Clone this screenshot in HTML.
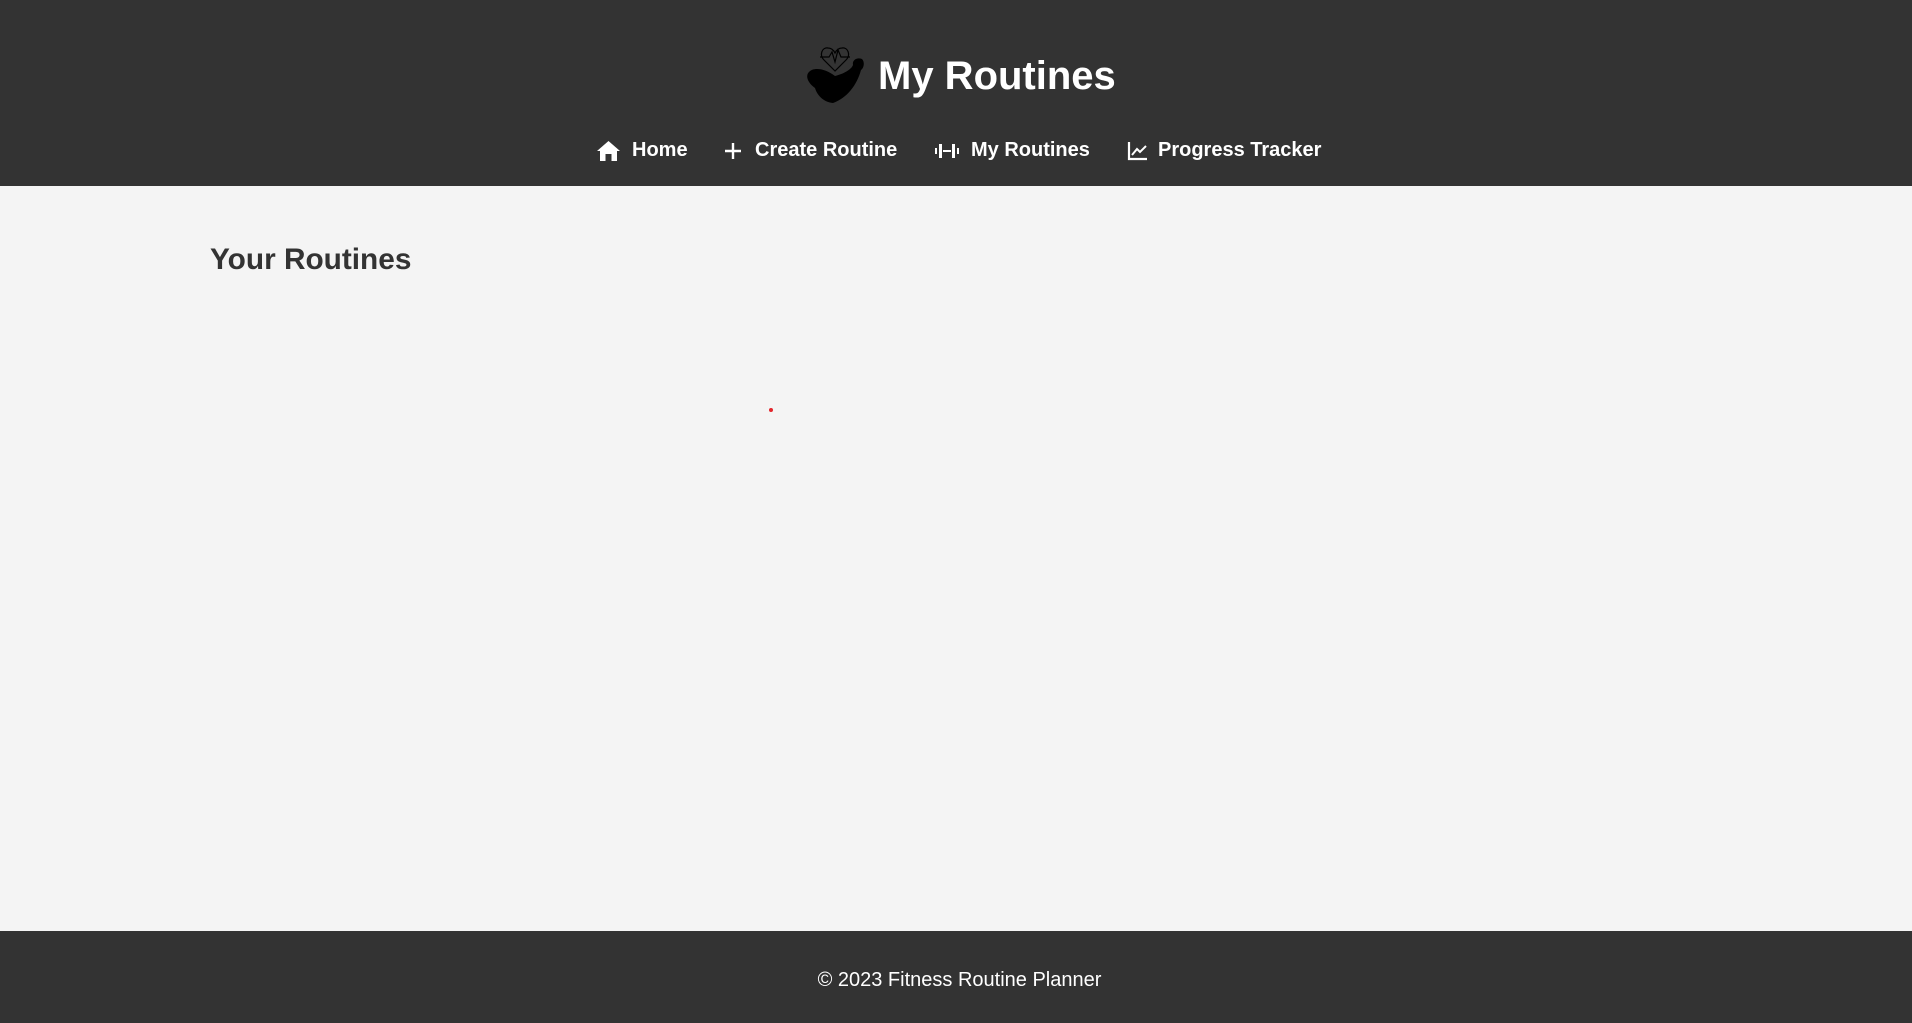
<!DOCTYPE html>
<html><head><meta charset="utf-8"><style>
*{margin:0;padding:0;box-sizing:border-box}
html{background:#333}
html,body{width:1912px;height:1023px;overflow:hidden;font-family:"Liberation Sans",Arial,sans-serif}
body{background:#f4f4f4;position:relative}
header{position:absolute;left:0;top:0;width:1912px;height:186px;background:#333;color:#fff}
.logo{position:absolute;left:795px;top:40px}
h1{position:absolute;left:878px;top:52px;font-size:40px;font-weight:bold;line-height:48px;white-space:nowrap}
nav a{position:absolute;top:138px;font-size:20px;font-weight:bold;color:#fff;line-height:24px;white-space:nowrap;text-decoration:none}
nav svg{position:absolute;top:140px}
h2{position:absolute;left:210px;top:242px;font-size:29.8px;color:#333;font-weight:bold;line-height:36px}
.dot{position:absolute;left:769px;top:408px;width:4px;height:4px;border-radius:50%;background:#e3262c}
footer{position:absolute;left:0;top:931px;height:92px;width:1912px;background:#333;color:#fff;font-size:20px;text-align:center;line-height:98px;padding-left:7px}
</style></head><body>
<header>
<svg class="logo" width="80" height="70" viewBox="0 0 80 70">
<path d="M40,31 L29,20 C24,15 27,7 33,8 C37,8 39,11 40,13 C41,11 43,8 47,8 C53,7 56,15 51,20 Z" fill="none" stroke="#000" stroke-width="1.2"/>
<path d="M25,17 L34,17 L37,12 L40,22 L43,10 L46,17 L55,17" fill="none" stroke="#000" stroke-width="1.2"/>
<path d="M14,32 C18,27 30,28 40,36 C48,34 56,30 58,25 C57,20 62,17 67,19 C70,22 69,28 66,30 C62,45 52,58 38,63 C28,62 22,55 20,48 C13,43 10,36 14,32 Z" fill="#000"/>
</svg>
<h1>My Routines</h1>
<nav>
<svg style="left:596px" width="25" height="22" viewBox="0 0 25 22"><path d="M12.5,1 L24,11 L21,11 L21,21 L15.5,21 L15.5,14 L9.5,14 L9.5,21 L4,21 L4,11 L1,11 Z" fill="#fff"/></svg>
<a style="left:632px">Home</a>
<svg style="left:724px" width="18" height="22" viewBox="0 0 18 22"><path d="M9,3 V19 M1,11 H17" stroke="#fff" stroke-width="2.4"/></svg>
<a style="left:755px">Create Routine</a>
<svg style="left:934px" width="26" height="22" viewBox="0 0 26 22"><path d="M1,8h2v6H1z M5,4h3v14H5z M9,10h8v2H9z M18,4h3v14h-3z M23,8h2v6h-2z" fill="#fff"/></svg>
<a style="left:971px">My Routines</a>
<svg style="left:1127px" width="22" height="22" viewBox="0 0 22 22"><path d="M2,2 V19 H20" fill="none" stroke="#fff" stroke-width="2.2"/><path d="M5,15 L10,9 L13,12 L19,6" fill="none" stroke="#fff" stroke-width="2"/></svg>
<a style="left:1158px">Progress Tracker</a>
</nav>
</header>
<h2>Your Routines</h2>
<div class="dot"></div>
<footer>© 2023 Fitness Routine Planner</footer>
</body></html>
